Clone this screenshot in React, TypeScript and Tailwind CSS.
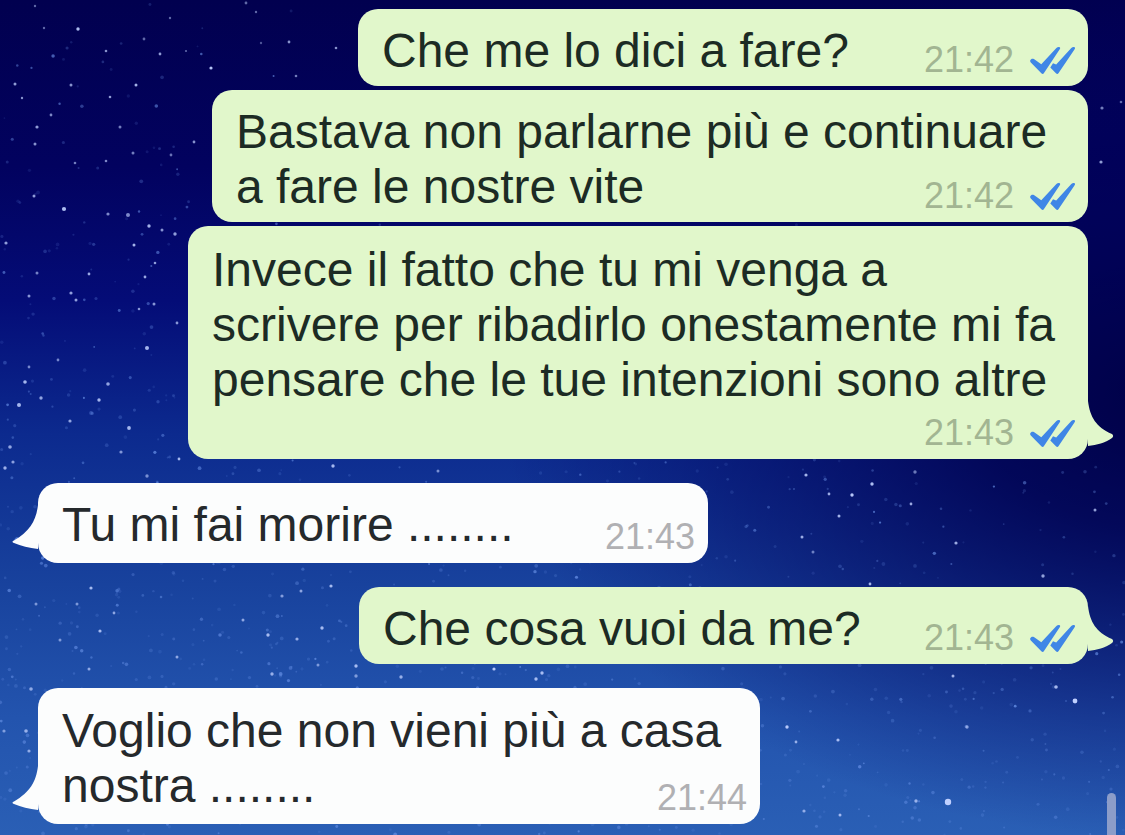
import React from "react";

type Message = {
  text: string;
  time: string;
  mine: boolean;
  tail: boolean;
  width: string;
  spacing: string;
  padding: string;
};

const messages: Message[] = [
  { text: "Che me lo dici a fare?", time: "21:42", mine: true, tail: false, width: "w-[730px]", spacing: "mt-[9px]", padding: "pt-[14px] pb-2" },
  { text: "Bastava non parlarne più e continuare a fare le nostre vite", time: "21:42", mine: true, tail: false, width: "w-[876px]", spacing: "mt-1", padding: "pt-[14px] pb-2" },
  { text: "Invece il fatto che tu mi venga a scrivere per ribadirlo onestamente mi fa pensare che le tue intenzioni sono altre", time: "21:43", mine: true, tail: true, width: "w-[900px]", spacing: "mt-1", padding: "pt-4 pb-[52px]" },
  { text: "Tu mi fai morire ........", time: "21:43", mine: false, tail: true, width: "w-[670px]", spacing: "mt-6", padding: "pt-[14px] pb-[11px]" },
  { text: "Che cosa vuoi da me?", time: "21:43", mine: true, tail: true, width: "w-[729px]", spacing: "mt-6", padding: "pt-[14px] pb-2" },
  { text: "Voglio che non vieni più a casa nostra ........", time: "21:44", mine: false, tail: true, width: "w-[722px]", spacing: "mt-6", padding: "pt-[15px] pb-[11px]" },
];

// x, y, radius, opacity of the brightest stars
const brightStars: number[][] = [
  [35, 6, 1.2, 0.5], [78, 29, 1.7, 0.9], [44, 28, 1.2, 0.5], [106, 51, 1.3, 0.7], [160, 54, 1.4, 0.75], [186, 51, 1.1, 0.5], [144, 39, 1.4, 0.5],
  [211, 68, 1.6, 0.95], [289, 42, 1.4, 0.7], [336, 48, 1.3, 0.7], [136, 85, 1.5, 0.85], [71, 85, 1.5, 0.7], [15, 84, 1.5, 0.75],
  [22, 98, 1.2, 0.7], [110, 97, 1.3, 0.75], [51, 115, 1.4, 0.65], [37, 127, 1.6, 0.75], [120, 127, 1.5, 0.6], [35, 144, 1.5, 0.7],
  [133, 153, 1.5, 0.6], [194, 142, 1.4, 0.7], [171, 155, 1.4, 0.55], [106, 161, 1.3, 0.65], [75, 163, 1.3, 0.6], [34, 196, 1.5, 0.75],
  [64, 209, 2.1, 0.9], [108, 214, 1.6, 0.65], [128, 215, 2, 0.65], [149, 226, 1.7, 0.85], [162, 230, 1.5, 0.7], [175, 234, 1.7, 0.75],
  [6, 243, 1.6, 0.75], [134, 245, 1.5, 0.85], [155, 263, 1.3, 0.75], [37, 273, 1.5, 0.6], [89, 274, 1.4, 0.8], [145, 277, 1.4, 0.8],
  [29, 296, 1.5, 0.7], [71, 293, 1.6, 0.75], [76, 300, 1.5, 0.75], [154, 304, 1.5, 0.7], [139, 309, 1.3, 0.7], [177, 323, 1.4, 0.7],
  [147, 348, 2, 0.85], [58, 360, 1.4, 0.6], [29, 367, 1.4, 0.6], [25, 382, 1.8, 0.85], [108, 384, 1.8, 0.75], [41, 398, 1.7, 0.75],
  [19, 405, 2, 0.85], [99, 400, 1.7, 0.85], [70, 421, 1.6, 0.75], [129, 428, 1.9, 0.85], [10, 447, 1.8, 0.75], [121, 452, 1.6, 0.65],
  [13, 462, 1.6, 0.7], [5, 468, 1.7, 0.8], [179, 459, 1.4, 0.85], [147, 476, 1.7, 0.6], [333, 466, 1.7, 0.85], [438, 471, 1.5, 0.6],
  [806, 475, 1.6, 0.85], [872, 484, 1.7, 0.9], [829, 494, 1.4, 0.8], [852, 495, 1.7, 0.95], [915, 472, 1.7, 0.55], [911, 504, 1.4, 0.8],
  [839, 516, 1.5, 0.85], [802, 537, 1.5, 0.8], [813, 552, 1.5, 0.55], [956, 543, 1.6, 0.8], [1043, 576, 1.7, 0.75], [1095, 510, 1.5, 0.75],
  [870, 584, 1.4, 0.85], [331, 586, 1.6, 0.85], [282, 596, 1.6, 0.65], [322, 628, 1.7, 0.85], [268, 635, 1.7, 0.85], [297, 639, 1.6, 0.75],
  [243, 620, 1.5, 0.7], [301, 591, 1.5, 0.7], [177, 657, 1.5, 0.7], [91, 588, 1.6, 0.85], [100, 631, 1.6, 0.85], [114, 613, 1.4, 0.7],
  [60, 640, 1.5, 0.6], [36, 604, 1.5, 0.6], [77, 604, 1.5, 0.6], [89, 669, 1.5, 0.7], [31, 689, 1.8, 0.7], [26, 731, 1.8, 0.75],
  [29, 751, 1.6, 0.7], [4, 731, 1.6, 0.6], [318, 665, 1.5, 0.6], [401, 677, 1.7, 0.75], [356, 666, 1.7, 0.85], [356, 676, 1.7, 0.6],
  [272, 674, 1.7, 0.75], [494, 669, 1.6, 0.95], [542, 673, 1.7, 0.85], [536, 679, 1.7, 0.85], [1056, 687, 1.8, 0.85], [1075, 701, 2.4, 1],
  [953, 676, 1.5, 0.8], [787, 727, 1.7, 0.95], [838, 740, 1.6, 0.85], [967, 727, 1.7, 0.65], [796, 742, 1.4, 0.75], [948, 802, 3.2, 1],
  [916, 801, 1.7, 0.75], [804, 811, 1.6, 0.7], [840, 815, 1.5, 0.8], [1102, 108, 1.6, 0.6], [1121, 102, 1.3, 0.5], [1101, 162, 1.6, 0.75],
  [246, 3, 1.4, 0.5], [170, 18, 1.2, 0.5], [256, 12, 1.2, 0.5], [261, 43, 1.2, 0.4], [296, 76, 1.3, 0.6],
];

function makeDust(): number[][] {
  let seed = 4711;
  const next = () => {
    seed = (seed * 16807) % 2147483647;
    return seed / 2147483647;
  };
  const dust: number[][] = [];
  for (let i = 0; i < 3600; i++) {
    const x = next() * 1125;
    const y = next() * 835;
    const density = 0.1 + (y / 835) * 0.9 - (x / 1125) * 0.4;
    const size = 0.9 + next() * 1;
    const opacity = 0.12 + next() * next() * 0.6;
    if (next() < density) dust.push([x, y, size, opacity]);
  }
  return dust;
}

const dust = makeDust();

function NightSky() {
  return (
    <svg aria-hidden="true" className="absolute inset-0 h-full w-full" viewBox="0 0 1125 835" preserveAspectRatio="xMidYMid slice">
      <defs>
        <linearGradient id="sky" x1="0" y1="0" x2="0" y2="1">
          <stop offset="0" stopColor="#01004f" />
          <stop offset="0.2" stopColor="#02025f" />
          <stop offset="0.36" stopColor="#040c77" />
          <stop offset="0.52" stopColor="#0c2a8e" />
          <stop offset="0.7" stopColor="#18429d" />
          <stop offset="0.86" stopColor="#2354ae" />
          <stop offset="1" stopColor="#2a5fb5" />
        </linearGradient>
        <radialGradient id="dusk" gradientUnits="userSpaceOnUse" cx="0" cy="0" r="1" gradientTransform="translate(1180 400) scale(680 440)">
          <stop offset="0" stopColor="#000046" />
          <stop offset="0.3" stopColor="#00004f" stopOpacity="0.85" />
          <stop offset="1" stopColor="#000060" stopOpacity="0" />
        </radialGradient>
        <filter id="soft" x="0" y="0" width="1" height="1">
          <feGaussianBlur stdDeviation="0.6" />
        </filter>
      </defs>
      <rect width="1125" height="835" fill="url(#sky)" />
      <rect width="1125" height="835" fill="url(#dusk)" />
      <g fill="#7099ee" filter="url(#soft)">
        {dust.map(([x, y, r, o], i) => (
          <circle key={i} cx={x} cy={y} r={r} opacity={o} />
        ))}
      </g>
      <g fill="#c0d0ff">
        {brightStars.map(([x, y, r, o], i) => (
          <circle key={i} cx={x} cy={y} r={r} opacity={o} />
        ))}
      </g>
    </svg>
  );
}

function ReadTicks() {
  return (
    <svg role="img" aria-label="Letto" className="h-[27px] w-[45px] shrink-0" viewBox="0 0 45 27" fill="#3f86e6">
      <path d="M0.3 13.2C0.8 11.8 2.6 11.2 3.9 12.1L11.3 17.2L26.4 1.1C27.6 -0.1 29.2 -0.1 29.9 0.5C30.5 1.100 30 2 29.4 2.800L14 26C13.4 27 12.3 27.2 11.6 26.4L0.8 15.400C0.2 14.800 0 14 0.3 13.2Z" />
      <path d="M23 16.200L26.200 17.600L41.300 1.1C42.500 -0.1 44.100 -0.1 44.800 0.5C45.400 1.100 44.900 2 44.300 2.800L28.600 26C28 27 26.900 27.200 26.200 26.400L20.300 20.600Z" />
    </svg>
  );
}

function Tail({ mine }: { mine: boolean }) {
  return mine ? (
    <svg aria-hidden="true" className="absolute bottom-[12px] left-full h-[46px] w-[26px]" viewBox="0 0 26 46" fill="#e1f7cb">
      <path d="M0 0C2 16 8 26 24 33C25.500 34 25.500 36 24 37C17 42 9 44 0 45Z" />
    </svg>
  ) : (
    <svg aria-hidden="true" className="absolute right-full bottom-[12px] h-[46px] w-[26px]" viewBox="0 0 26 46" fill="#fcfdfd">
      <path d="M26 0C24 16 18 26 2 35.500C0 36 0 37.500 2 38C9 41 17 43 26 44Z" />
    </svg>
  );
}

function Bubble({ message }: { message: Message }) {
  const { text, time, mine, tail, width, spacing, padding } = message;
  return (
    <li className={`relative grid max-w-full rounded-[20px] ${width} ${spacing} ${mine ? "self-end bg-[#e1f7cb]" : "self-start bg-[#fcfdfd]"}`}>
      {tail && <Tail mine={mine} />}
      <p className={`col-start-1 row-start-1 px-6 text-5xl leading-[55px] ${padding} ${mine ? "text-[#1c2b24]" : "text-[#25292c]"}`}>{text}</p>
      <div className={`col-start-1 row-start-1 flex items-center gap-4 self-end justify-self-end pr-[13px] pb-[6px] text-[36px] leading-10 ${mine ? "text-[#a2b592]" : "text-[#b0b0b3]"}`}>
        <time>{time}</time>
        {mine && <ReadTicks />}
      </div>
    </li>
  );
}

export default function App() {
  return (
    <main className="relative min-h-screen overflow-hidden bg-[#02025f] font-['Liberation_Sans',Arial,sans-serif]">
      <NightSky />
      <ul className="relative flex flex-col pr-[37px] pb-[11px] pl-[38px]">
        {messages.map((message, i) => (
          <Bubble key={i} message={message} />
        ))}
      </ul>
      <div aria-hidden="true" className="absolute right-[9px] bottom-0 h-[42px] w-[9px] rounded-t-full bg-[#8c9dc9]" />
    </main>
  );
}
